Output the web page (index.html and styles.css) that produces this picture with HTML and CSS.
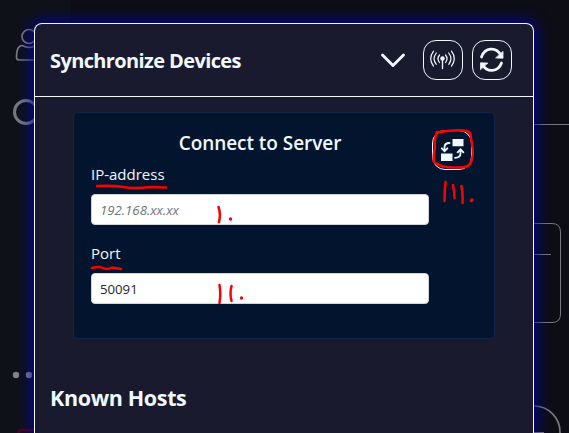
FILE: index.html
```html
<!DOCTYPE html>
<html lang="en">
<head>
<meta charset="utf-8">
<title>Synchronize Devices</title>
<link rel="stylesheet" href="styles.css">
</head>
<body>
<svg class="backdrop" viewBox="0 0 569 433" aria-hidden="true">
  <rect width="71" height="433" fill="#0f1119"/>
  <g fill="none" stroke="#77787e">
    <circle cx="29" cy="36.5" r="7" stroke-width="1.7"/>
    <path d="M40 60H19q-2.500 0-2.500-3c0-7 2-11.500 6-11.500q6.500 4 13 0" stroke-width="1.700"/>
    <circle cx="26" cy="112" r="11.500" stroke-width="3"/>
    <path d="M534 124.500h35M534 254.500h17M534 223.500h18q8.500 0 8.500 8.500v82q0 8.500-8.500 8.500h-18"/>
    <circle cx="534" cy="432" r="26" stroke-width="1.700"/>
    <path d="M534 432.500h10"/>
  </g>
  <circle cx="16" cy="375" r="3.200" fill="#818287"/>
  <circle cx="29" cy="375" r="3.200" fill="#818287"/>
  <path d="M18.500 433q0-3 3-3H40" fill="none" stroke="#480525" stroke-width="2.500"/>
</svg>
<main class="modal">
  <header class="modal-header">
    <h1>Synchronize Devices</h1>
    <svg class="chevron" viewBox="0 0 26 16"><path d="M2.500 3 13 13.500 23.500 3"/></svg>
    <button class="icon-button" aria-label="Broadcast">
      <svg viewBox="0 0 38 38">
        <circle cx="18.500" cy="17.500" r="2.200" fill="#f0f8ff" stroke="none"/>
        <path d="M18.500 18.500v9" stroke-width="1.300"/>
        <path d="M15.500 14q-3 3.700 0 7.500M12.300 12q-4.500 5.700 0 11.400M9.500 10.200q-5.500 7.500 0 15M21.500 14q3 3.700 0 7.500M24.700 12q4.500 5.700 0 11.400M27.500 10.200q5.500 7.500 0 15" stroke-width="1.200"/>
      </svg>
    </button>
    <button class="icon-button" aria-label="Refresh">
      <svg viewBox="0 0 38 38">
        <path d="M8.500 16C12 6 23 6 27.500 13.500M28.500 22C25 31.500 14 31.500 9.500 24" stroke-width="2.800"/>
        <path d="M30 10.700v6.500l-7-.3zM7.500 28.300v-6.500l7 .3z" fill="#f0f8ff" stroke-linejoin="round" stroke-width=".8"/>
      </svg>
    </button>
  </header>
  <section class="connect">
    <form class="fields">
      <h2>Connect to Server</h2>
      <label for="ip">IP-address</label>
      <input id="ip" type="text" placeholder="192.168.xx.xx">
      <label for="port">Port</label>
      <input id="port" type="text" value="50091">
    </form>
    <button class="icon-button" aria-label="Connect">
      <svg viewBox="0 0 38 38">
        <path d="M19.500 8h11v7.300h-11zM8 22.500h11.500v7.500H8z" fill="#f0f8ff" stroke="none"/>
        <path d="M16.500 12q-5 0-5 4.500v3.500M8.800 17.300l2.700 3 2.900-3M22 26.800q5.500 0 5.500-4.500v-3.500M24.600 21.300l2.900-3 2.900 3" stroke-width="1.800"/>
      </svg>
    </button>
  </section>
  <h1 class="known">Known Hosts</h1>
</main>
<svg class="annotations" viewBox="0 0 569 433" aria-hidden="true">
  <path d="M97 186Q112 185 123 187T150 187L166 187.500M92 268Q99 266 103 268T112 267.500L121 269"/>
  <path d="M436.500 132.500C447 131 456 129 467 131Q471 132 471 138C472 145 475 154 471 162Q469 168 458 167.500C448 168 440 167 434 162Q433 156 435 148Q434 139 437 132"/>
  <path d="M218.500 207q2.500 7 .5 15M219.500 285q1.500 9 0 18M231.500 286q-2 7 0 15M445.500 182q-1 9-1 19M453 185q1.500 6 1.500 13M461.500 186q1.500 8 1 17"/>
  <path class="dots" d="M230.500 219v.1M241.500 298v.1M472 200l-.5.500"/>
</svg>
</body>
</html>
```
FILE: styles.css
```css
* { box-sizing: border-box; }

body {
  margin: 0;
  height: 433px;
  overflow: hidden;
  background: #0d0d16;
  color: #f0f8ff;
  font-family: "Segoe UI", "Open Sans", "Noto Sans", sans-serif;
}

.backdrop,
.annotations {
  position: absolute;
  top: 0;
  left: 0;
  width: 569px;
  height: 433px;
}

.annotations {
  z-index: 2;
  fill: none;
  stroke: #ff0000;
  stroke-width: 2.5;
  stroke-linecap: round;
  stroke-linejoin: round;
  pointer-events: none;
}

.annotations .dots { stroke-width: 3.4; }

.modal {
  position: relative;
  width: 500px;
  height: 410px;
  margin: 23px 0 0 34px;
  border: 1px solid #f0f8ff;
  border-bottom: 0;
  border-radius: 8px 8px 0 0;
  background: #1a1a2e;
  box-shadow: 0 0 15px 1px #0000b0;
  clip-path: inset(-23px -35px 0 -34px);
}

.modal-header {
  display: flex;
  align-items: center;
  height: 73px;
  padding: 0 21px 0 15px;
  border-bottom: 1px solid #f0f8ff;
}

h1, h2 { margin: 0; white-space: nowrap; }

h1 {
  flex: 1;
  padding-top: 2px;
  font-size: 20px;
  line-height: 28px;
  font-weight: 700;
  letter-spacing: -0.62px;
}

.chevron {
  width: 26px;
  height: 16px;
  margin-right: 17px;
  fill: none;
  stroke: #f0f8ff;
  stroke-width: 2.9;
  stroke-linecap: round;
  stroke-linejoin: round;
}

.icon-button {
  flex: none;
  width: 40px;
  height: 40px;
  padding: 0;
  border: 1px solid #f0f8ff;
  border-radius: 13px;
  background: transparent;
}

.icon-button + .icon-button { margin-left: 9px; }

.icon-button svg {
  display: block;
  width: 38px;
  height: 38px;
  fill: none;
  stroke: #f0f8ff;
  stroke-linecap: round;
}

.connect {
  display: flex;
  width: 422px;
  height: 227px;
  margin: 15px 0 0 38px;
  padding: 17px 0 0 17px;
  border: 1px solid #14234a;
  border-radius: 5px;
  background: #03142e;
}

.fields {
  display: flex;
  flex-direction: column;
  width: 338px;
  margin-right: 3px;
}

h2 {
  height: 27px;
  font-size: 19px;
  line-height: 26px;
  font-weight: 600;
  letter-spacing: -0.05px;
  text-align: center;
}

label {
  height: 24px;
  margin-top: 5px;
  font-size: 15px;
  line-height: 24px;
}

input {
  height: 31px;
  margin: 8px 0 11px;
  padding: 0 8px;
  border: 1px solid #ced4da;
  border-radius: 4px;
  outline: 0;
  background: #fff;
  color: #212529;
  font: 13.2px/20px "Segoe UI", "Open Sans", "Noto Sans", sans-serif;
}

input::placeholder { color: #6c757d; font-style: italic; opacity: 1; }

.known {
  margin: 41px 0 0 15px;
  font-size: 21.5px;
  line-height: 32px;
  letter-spacing: -0.35px;
}
```
